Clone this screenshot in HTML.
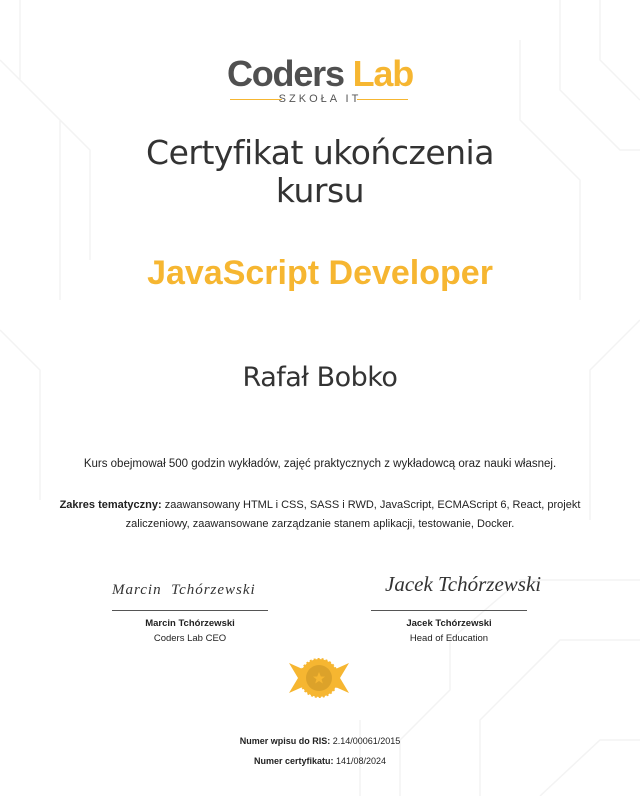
<!DOCTYPE html>
<html><head><meta charset="utf-8"><style>
body{margin:0;width:640px;height:796px;background:#fff;position:relative;overflow:hidden;font-family:"Liberation Sans",sans-serif;color:#222}
.a{position:absolute;left:0;width:640px;text-align:center;white-space:nowrap}
</style></head><body>
<svg width="640" height="796" style="position:absolute;left:0;top:0" fill="none" stroke="#f3f3f3" stroke-width="1.5">
<path d="M0 60 L60 120 L60 300 M20 0 L20 80 L90 150 L90 260 M0 330 L40 370 L40 500 M560 0 L560 90 L620 150 L640 150 M600 0 L600 60 L640 100 M520 40 L520 120 L580 180 L580 300 M640 320 L590 370 L590 520 M400 796 L400 740 L450 690 L450 640 L520 580 L640 580 M480 796 L480 720 L560 640 L640 640 M540 796 L600 740 L640 740 M360 796 L360 720"/>
</svg>
<div class="a" style="top:53px;font-size:36px;font-weight:bold;letter-spacing:-1.2px;color:#505050">Coders <span style="color:#f6b631">Lab</span></div>
<div style="position:absolute;left:230px;top:99px;width:52px;border-top:1px solid #f6b631"></div>
<div style="position:absolute;left:357px;top:99px;width:51px;border-top:1px solid #f6b631"></div>
<div class="a" style="top:93px;font-size:11px;letter-spacing:3px;color:#555">SZKOŁA IT</div>
<div class="a" style="top:134px;font-size:33px;line-height:38px;color:#333;font-family:'DejaVu Sans',sans-serif;letter-spacing:-0.5px">Certyfikat ukończenia<br>kursu</div>
<div class="a" style="top:254px;font-size:34px;font-weight:bold;color:#f6b631">JavaScript Developer</div>
<div class="a" style="top:362px;font-size:27px;color:#333;font-family:'DejaVu Sans',sans-serif;letter-spacing:-0.5px">Rafał Bobko</div>
<div class="a" style="top:458px;font-size:11.5px">Kurs obejmował 500 godzin wykładów, zajęć praktycznych z wykładowcą oraz nauki własnej.</div>
<div class="a" style="top:496px;font-size:11px;line-height:19px"><b>Zakres tematyczny:</b> zaawansowany HTML i CSS, SASS i RWD, JavaScript, ECMAScript 6, React, projekt<br>zaliczeniowy, zaawansowane zarządzanie stanem aplikacji, testowanie, Docker.</div>
<div style="position:absolute;left:112px;top:582px;font:italic 15px 'Liberation Serif',serif;color:#333;letter-spacing:1px">Marcin&nbsp;&nbsp;Tchórzewski</div>
<div style="position:absolute;left:385px;top:572px;font:italic 21px 'Liberation Serif',serif;color:#333">Jacek Tchórzewski</div>
<div style="position:absolute;left:112px;top:610px;width:156px;border-top:1px solid #555"></div>
<div style="position:absolute;left:371px;top:610px;width:156px;border-top:1px solid #555"></div>
<div style="position:absolute;left:90px;top:616px;width:200px;text-align:center;font-size:9.5px;line-height:15px"><b>Marcin Tchórzewski</b><br>Coders Lab CEO</div>
<div style="position:absolute;left:349px;top:616px;width:200px;text-align:center;font-size:9.5px;line-height:15px"><b>Jacek Tchórzewski</b><br>Head of Education</div>
<svg style="position:absolute;left:289px;top:657px" width="60" height="42" viewBox="0 0 60 42">
<path d="M0 6 L18 14 L18 28 L0 36 L9 21Z M60 6 L42 14 L42 28 L60 36 L51 21Z" fill="#f6b631"/>
<circle cx="30" cy="21" r="19" fill="#f6b631" stroke="#f6b631" stroke-width="2" stroke-dasharray="2 2"/>
<circle cx="30" cy="21" r="13" fill="#dca22a"/>
<path d="M30 15 L31.8 19.5 L36 19.6 L32.6 22.3 L33.8 26.5 L30 24 L26.2 26.5 L27.4 22.3 L24 19.6 L28.2 19.5Z" fill="#f6b631"/>
</svg>
<div class="a" style="top:736px;font-size:9px"><b>Numer wpisu do RIS:</b> 2.14/00061/2015</div>
<div class="a" style="top:756px;font-size:9px"><b>Numer certyfikatu:</b> 141/08/2024</div>
</body></html>
